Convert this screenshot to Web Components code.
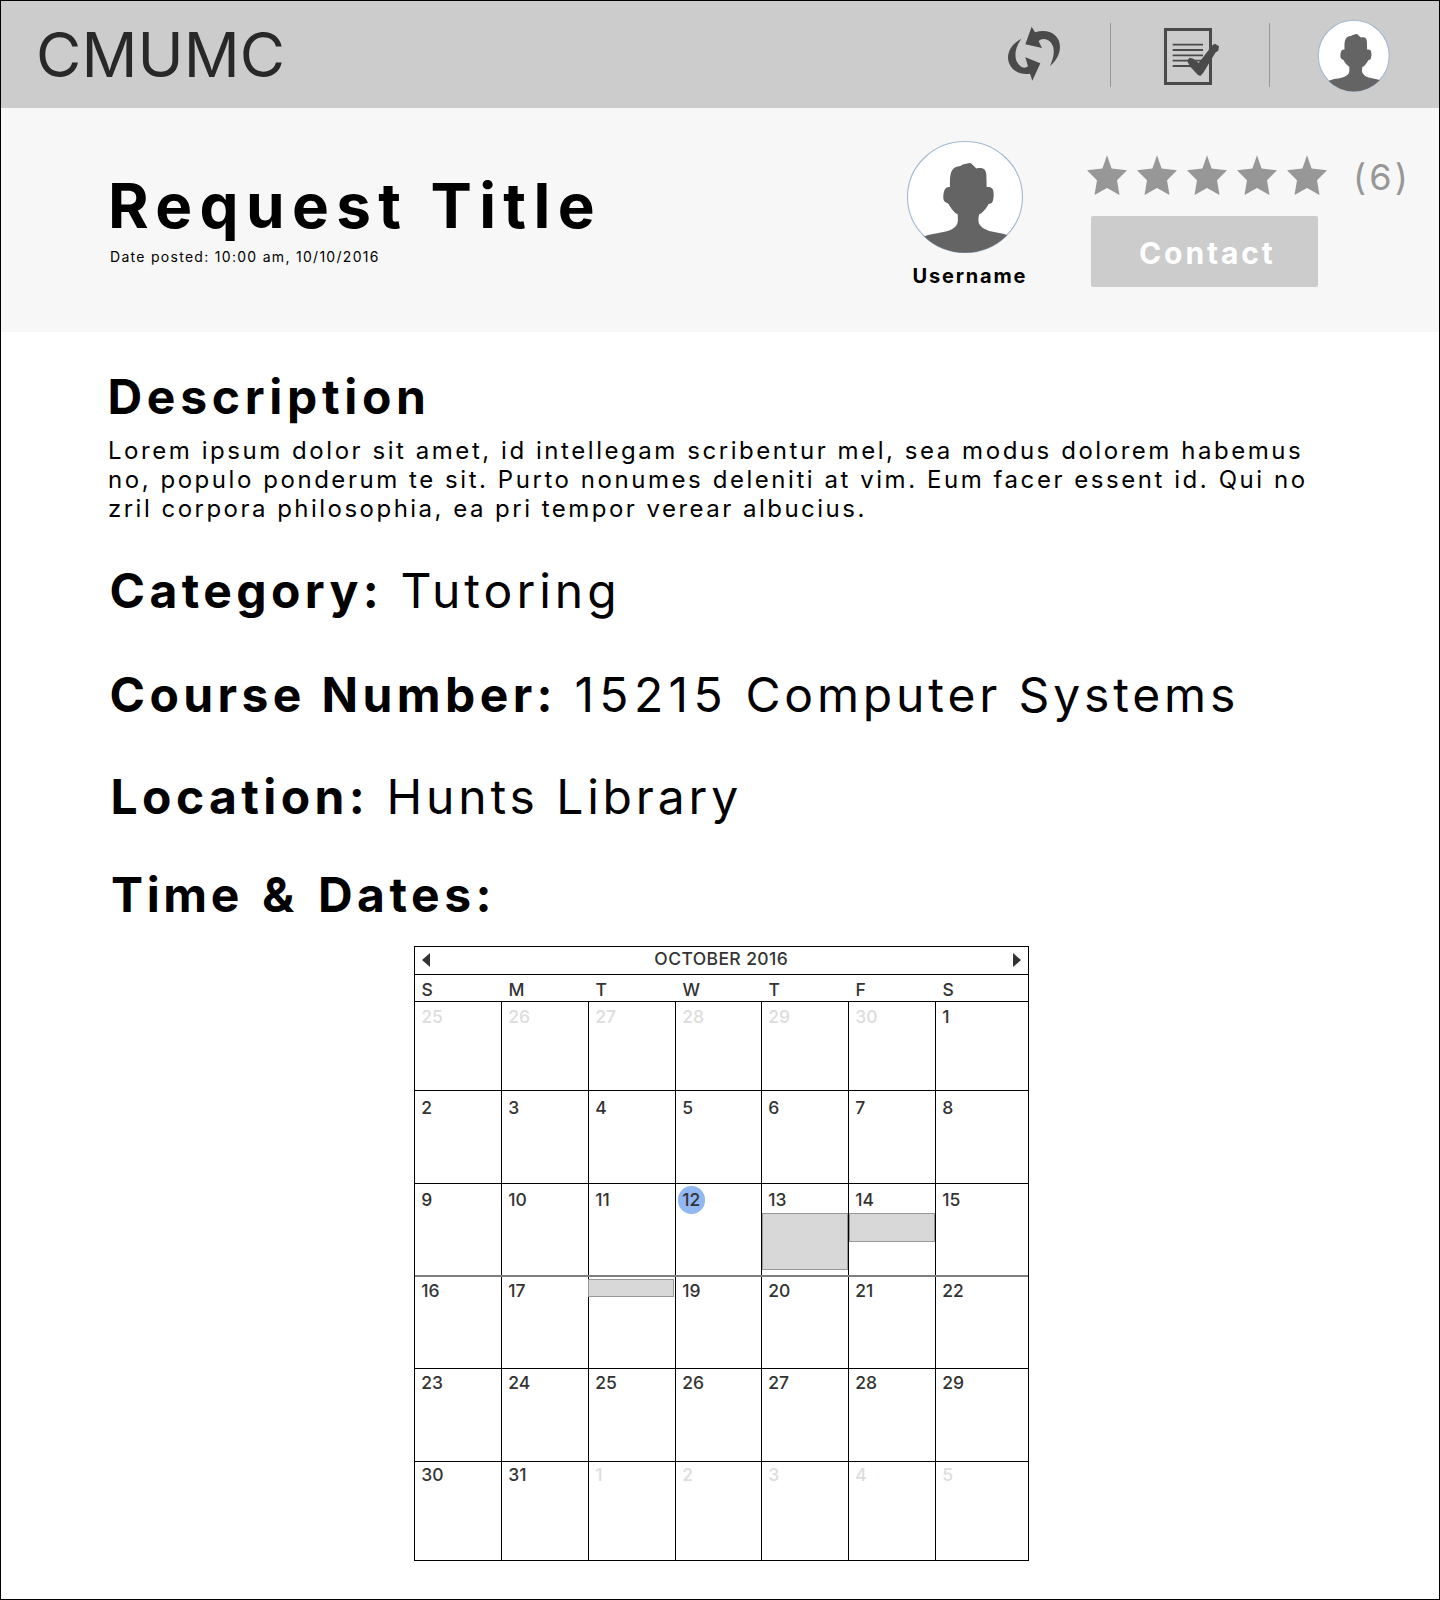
<!DOCTYPE html>
<html lang="en">
<head>
<meta charset="utf-8">
<title>CMUMC - Request</title>
<style>
html,body{margin:0;padding:0;background:#fff}
body{font-family:Inter,"Liberation Sans",sans-serif;color:#000}
</style>
</head>
<body>
<request-page>
  <top-bar slot="top">CMUMC</top-bar>
  <request-hero slot="hero" user="Username" reviews="(6)" action="Contact">
    <span slot="title">Request Title</span>
    <span slot="date">Date posted: 10:00 am, 10/10/2016</span>
  </request-hero>
  <detail-row style="--x:107.5px;--gap:35px;--ls:4.7px">Description</detail-row>
  <text-block>Lorem ipsum dolor sit amet, id intellegam scribentur mel, sea modus dolorem habemus<br>no, populo ponderum te sit. Purto nonumes deleniti at vim. Eum facer essent id. Qui no<br><span style="letter-spacing:2.48px">zril corpora philosophia, ea pri tempor verear albucius.</span></text-block>
  <detail-row style="--x:109.5px;--gap:38px">Category:<span slot="value"><span style="letter-spacing:4px">Tutoring</span></span></detail-row>
  <detail-row style="--x:109.5px;--gap:45px">Course Number:<span slot="value"><span style="letter-spacing:5.4px">15215</span> Computer Systems</span></detail-row>
  <detail-row style="--x:110.5px;--gap:43px">Location:<span slot="value">Hunts Library</span></detail-row>
  <detail-row style="--x:111px;--gap:39px;--ws:4.2px"><span style="letter-spacing:3.6px">Time &amp;</span><span style="letter-spacing:4.5px"> Dates:</span></detail-row>
  <month-calendar label="OCTOBER 2016"></month-calendar>
</request-page>

<script>
class Base extends HTMLElement{
  connectedCallback(){ if(!this.shadowRoot) this.attachShadow({mode:'open'}).innerHTML=this.render(); }
}

customElements.define('request-page',class extends Base{
  render(){return `<style>
    :host{display:flex;flex-direction:column;box-sizing:border-box;width:1440px;height:1600px;border:1px solid #000;background:#fff;overflow:hidden}
    main{display:flex;flex-direction:column;align-items:flex-start}
  </style><slot name="top"></slot><slot name="hero"></slot><main><slot></slot></main>`}
});

customElements.define('user-avatar',class extends Base{
  render(){return `<style>
    :host{display:block;flex:none}
    svg{display:block;width:100%;height:100%;overflow:visible}
  </style>
  <svg viewBox="21 14.5 348 337" preserveAspectRatio="none">
    <defs><clipPath id="c"><ellipse cx="195" cy="183" rx="173" ry="168"/></clipPath></defs>
    <ellipse cx="195" cy="183" rx="172.5" ry="167" fill="#fff" stroke="#a3b9d2" stroke-width="1.1" vector-effect="non-scaling-stroke"/>
    <path clip-path="url(#c)" fill="#646464" d="M150 153C148 108 155 92 181 90C189 84 200 83 209 81C217 82 221 92 230 97C251 93 258 101 259 116L260 153C272 153 281 153 281 176C280 200 276 202 266 204C256 222 246 232 237 236C235 252 233 258 241 269C258 291 298 288 322 298L340 360H50L74 301C100 290 140 291 157 279C173 268 175 262 173 235C160 228 150 212 145 203C133 199 129 195 130 179C132 160 136 153 150 153Z"/>
  </svg>`}
});

customElements.define('top-bar',class extends Base{
  render(){return `<style>
    :host{display:flex;flex:none;height:107px;background:#ccc;box-sizing:border-box}
    .logo{font-weight:380;font-size:62px;line-height:75px;letter-spacing:.1px;color:#282828;padding:16px 0 0 35px;flex:1}
    svg{display:block;flex:none}
    .sync{margin:19px 40px 0 0}
    .list{margin:19px 38px 0 44px}
    i{flex:none;width:1px;height:64px;margin-top:22px;background:#979797}
    user-avatar{width:71.5px;height:71.5px;margin:19px 49.5px 0 48px}
  </style>
  <div class="logo"><slot></slot></div>
  <svg class="sync" width="70" height="66" viewBox="0 0 210 198" fill="#4a4a4a">
    <path d="M95 20L105 37C142 24 180 42 180 80C180 105 165 125 150 138C163 110 166 84 153 68C142 54 123 54 116 64L126 84L76 73Z"/>
    <path d="M64 56C36 72 24 92 24 114C26 146 55 167 90 161L97 182L121 130L76 112L84 139C74 147 63 142 55 132C41 114 44 84 64 56Z"/>
  </svg>
  <i></i>
  <svg class="list" width="76" height="72" viewBox="0 0 228 216" fill="none" stroke="#4a4a4a">
    <rect x="31.5" y="28.5" width="135" height="162" stroke-width="9"/>
    <path stroke-width="5.5" d="M53 74H144M53 90H144M53 106H144M53 122H142M53 138H120"/>
    <path stroke="none" fill="#4a4a4a" d="M96 122L104 113L115 116L131 129L172 76L180 71L192 79L190 92L182 97L145 158L136 168L128 164L106 140Z"/>
  </svg>
  <i></i>
  <user-avatar></user-avatar>`}
});

customElements.define('star-rating',class extends Base{
  render(){
    const star='<svg width="40" height="40" viewBox="0 0 40 40"><path fill="#979797" d="M20 .3L24.6 13.6L40 15.3L30 25.3L32.5 40L20 33L7.5 40L10 25.3L0 15.3L15.4 13.6Z"/></svg>';
    return `<style>
    :host{display:flex;gap:10px}
    svg{display:block;flex:none}
  </style>${star.repeat(5)}`}
});

customElements.define('request-hero',class extends Base{
  render(){return `<style>
    :host{display:flex;flex:none;height:224px;background:#f7f7f7}
    .head{width:906px;flex:none;padding:60px 0 0 107px;box-sizing:border-box}
    h1{margin:0;font-weight:700;font-size:62px;line-height:75px;letter-spacing:7.35px;white-space:nowrap}
    p{margin:5px 0 0 2px;font-size:14px;line-height:17px;letter-spacing:1.29px}
    .user{flex:none;width:180px;padding-top:33px}
    user-avatar{width:116px;height:112px}
    .name{margin:11px 0 0 5.5px;font-weight:700;font-size:20px;line-height:24px;letter-spacing:1.8px}
    .side{padding-top:47px}
    .rate{display:flex;gap:26px}
    .count{font-size:36px;line-height:44px;letter-spacing:3.2px;color:#979797;white-space:nowrap}
    button{display:block;margin:17px 0 0 4px;width:227px;height:71px;border:0;border-radius:2px;background:#ccc;color:#fff;
      font:700 30px/36px Inter,sans-serif;letter-spacing:2.9px;text-align:left;padding:3px 0 0 48px}
  </style>
  <div class="head"><h1><slot name="title"></slot></h1><p><slot name="date"></slot></p></div>
  <div class="user"><user-avatar></user-avatar><div class="name">${this.getAttribute('user')}</div></div>
  <div class="side">
    <div class="rate"><star-rating></star-rating><span class="count">${this.getAttribute('reviews')}</span></div>
    <button>${this.getAttribute('action')}</button>
  </div>`}
});

customElements.define('detail-row',class extends Base{
  render(){return `<style>
    :host{display:block;margin:var(--gap) 0 0 calc(var(--x) - 1px);font-size:48px;line-height:59px;letter-spacing:3.85px;white-space:pre}
    b{font-weight:700;letter-spacing:var(--ls,4.4px);word-spacing:var(--ws,0px)}
  </style><b><slot></slot></b><span>${this.querySelector('[slot=value]')?' ':''}<slot name="value"></slot></span>`}
});

customElements.define('text-block',class extends Base{
  render(){return `<style>
    :host{display:block;margin:10px 0 0 107px;font-size:24px;line-height:29px;letter-spacing:2.55px;white-space:nowrap}
  </style><slot></slot>`}
});

customElements.define('calendar-day',class extends Base{
  render(){
    const e=this.getAttribute('event');
    return `<style>
    :host{display:block;position:relative;border-right:1px solid #000;padding:var(--pad) 0 0 6.2px;font-weight:500;font-size:17.5px;line-height:20px;color:#333}
    :host([muted]){color:#ddd}
    :host([last]){border-right:0}
    span{position:relative}
    .dot{position:absolute;left:1.5px;top:2px;width:27.5px;height:27.5px;border-radius:50%;background:#92b8f1}
    .ev{position:absolute;box-sizing:border-box;border:1px solid #979797;background:#d8d8d8;right:0}
  </style>${this.hasAttribute('today')?'<div class="dot"></div>':''}<span>${this.getAttribute('n')}</span>${e?`<div class="ev" style="${e}"></div>`:''}`}
});

customElements.define('month-calendar',class extends Base{
  render(){
    const days=[25,26,27,28,29,30];
    for(let i=1;i<=31;i++)days.push(i);
    for(let i=1;i<=5;i++)days.push(i);
    const ev={13:'left:0;top:29px;height:57px',14:'left:0;top:29px;height:29px',18:'left:-1px;right:1px;top:2px;height:18px'};
    const pads=[5,7,6,4,4,3];
    let rows='';
    for(let r=0;r<6;r++){
      rows+=`<div class="week" style="--pad:${pads[r]}px">`;
      for(let c=0;c<7;c++){
        const i=r*7+c,n=days[i],inMonth=i>5&&i<37;
        rows+=`<calendar-day n="${n}"${inMonth?'':' muted'}${c===6?' last':''}${inMonth&&n===12?' today':''}${inMonth&&ev[n]?` event="${ev[n]}"`:''}></calendar-day>`;
      }
      rows+='</div>';
    }
    return `<style>
    :host{display:grid;box-sizing:border-box;width:615px;height:615px;border:1px solid #000;margin:22px 0 0 413px;
      grid-template-rows:28px 27px 89px 93px 93px 92px 93px 98px;color:#333}
    .bar{display:flex;justify-content:space-between;border-bottom:1px solid #000;padding:0 7.5px 0 7px;box-sizing:border-box;font-weight:450;font-size:17.5px;line-height:20px;letter-spacing:.4px}
    .bar span{padding-top:2px}
    .bar svg{display:block;margin-top:6px}
    .names,.week{display:grid;grid-template-columns:87px 87px 87px 86px 87px 87px 92px;border-bottom:1px solid #000;box-sizing:border-box}
    .names span{font-weight:450;font-size:17.5px;line-height:20px;padding:5px 0 0 6.5px}
    .week:nth-of-type(5){border-bottom:2px solid #7f7f7f}
    .week:last-child{border-bottom:0}
  </style>
  <div class="bar"><svg width="8" height="14"><path fill="#333" d="M0 7L8 0V14Z"/></svg><span>${this.getAttribute('label')}</span><svg width="8" height="14"><path fill="#333" d="M8 7L0 0V14Z"/></svg></div>
  <div class="names">${[...'SMTWTFS'].map(d=>`<span>${d}</span>`).join('')}</div>${rows}`}
});
</script>
</body>
</html>
